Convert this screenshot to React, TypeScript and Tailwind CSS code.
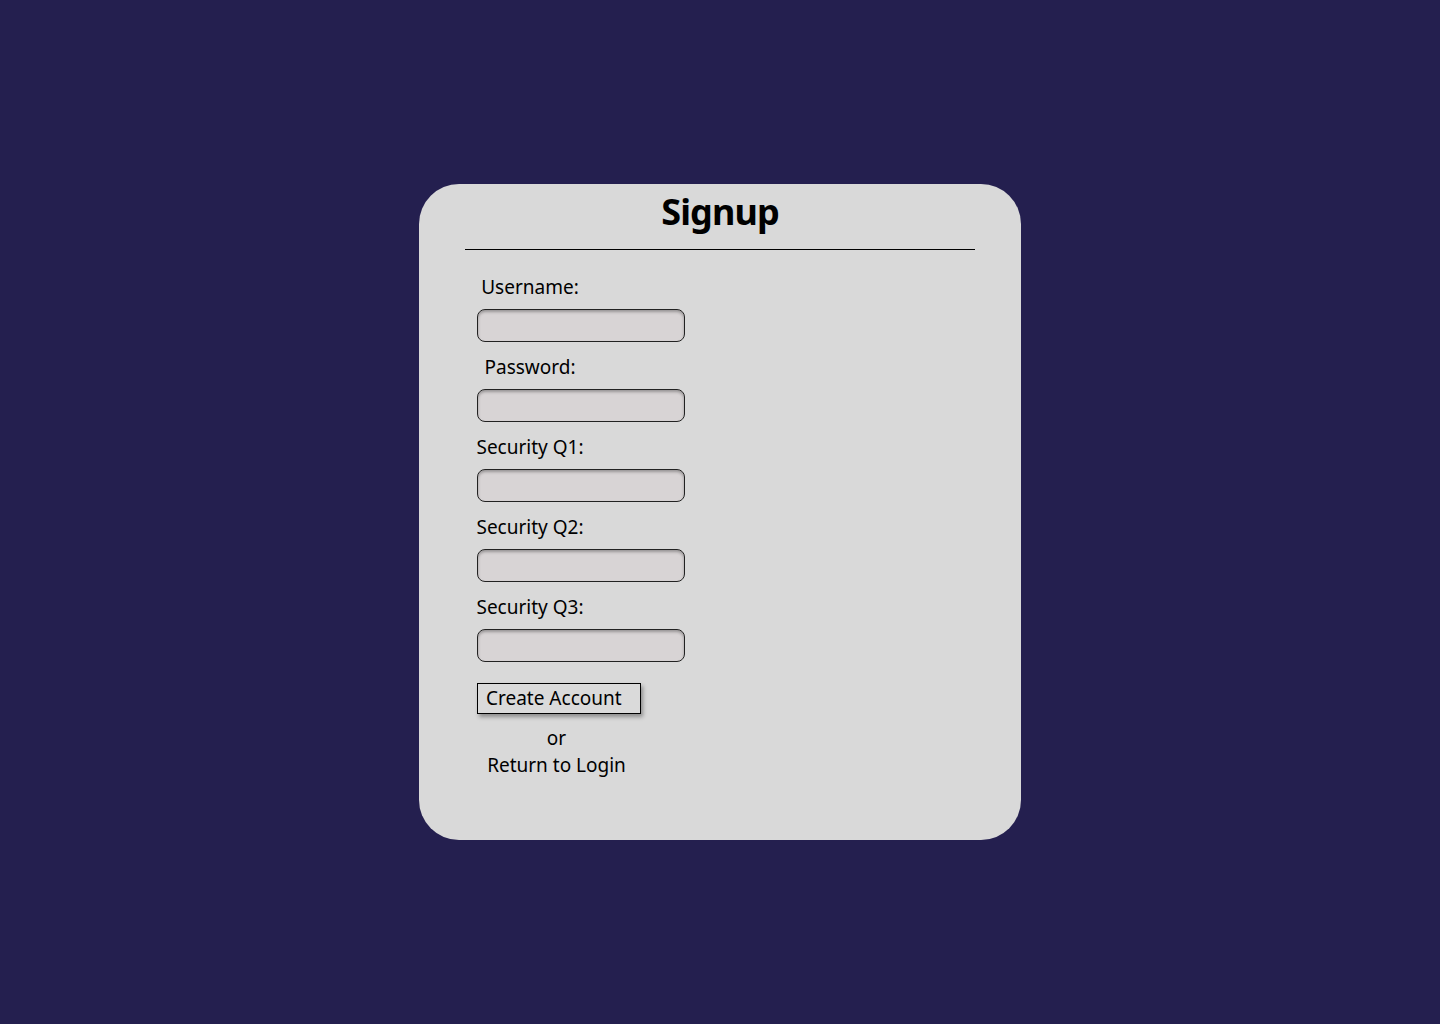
import React from "react";

const fields = ["Username:", "Password:", "Security Q1:", "Security Q2:", "Security Q3:"];

export default function App() {
  return (
    <div
      className="min-h-screen w-full bg-[#241f4f] flex items-start justify-center pt-[184px]"
      style={{ fontFamily: '"Noto Sans", "Open Sans", sans-serif' }}
    >
      <div className="w-[602px] h-[656px] bg-[#d9d9d9] rounded-[40px] flex flex-col items-center">
        <h1 className="text-[36px] font-bold text-black leading-none mt-[10px] tracking-tight">Signup</h1>
        <div className="w-[510px] h-px bg-black mt-[19px]" />
        <div className="w-[510px] flex flex-col items-start pl-[10px] mt-[25px]">
          {fields.map((f) => (
            <div key={f} className="flex flex-col items-start">
              <div className="w-[112px] text-center text-[19px] text-black leading-[24px] -ml-[1px] whitespace-nowrap">{f}</div>
              <input
                className="mt-[10px] mb-[13px] ml-[2px] w-[208px] h-[33px] rounded-[8px] border border-[#222] bg-[#d8d4d5] shadow-[inset_0_2px_3px_rgba(0,0,0,0.3)] outline-none"
              />
            </div>
          ))}
          <div className="ml-[2px] mt-[8px] flex flex-col items-center w-[164px]">
            <button className="w-[164px] h-[31px] border border-black bg-[#dadada] text-[19px] text-black leading-none text-left px-[8px] whitespace-nowrap shadow-[2px_3px_4px_rgba(0,0,0,0.35)]">
              Create Account
            </button>
            <div className="text-[19px] text-black mt-[12px] leading-[24px] -ml-[5px]">or</div>
            <div className="text-[19px] text-black leading-[24px] mt-[3px] -ml-[5px] whitespace-nowrap">Return to Login</div>
          </div>
        </div>
      </div>
    </div>
  );
}
